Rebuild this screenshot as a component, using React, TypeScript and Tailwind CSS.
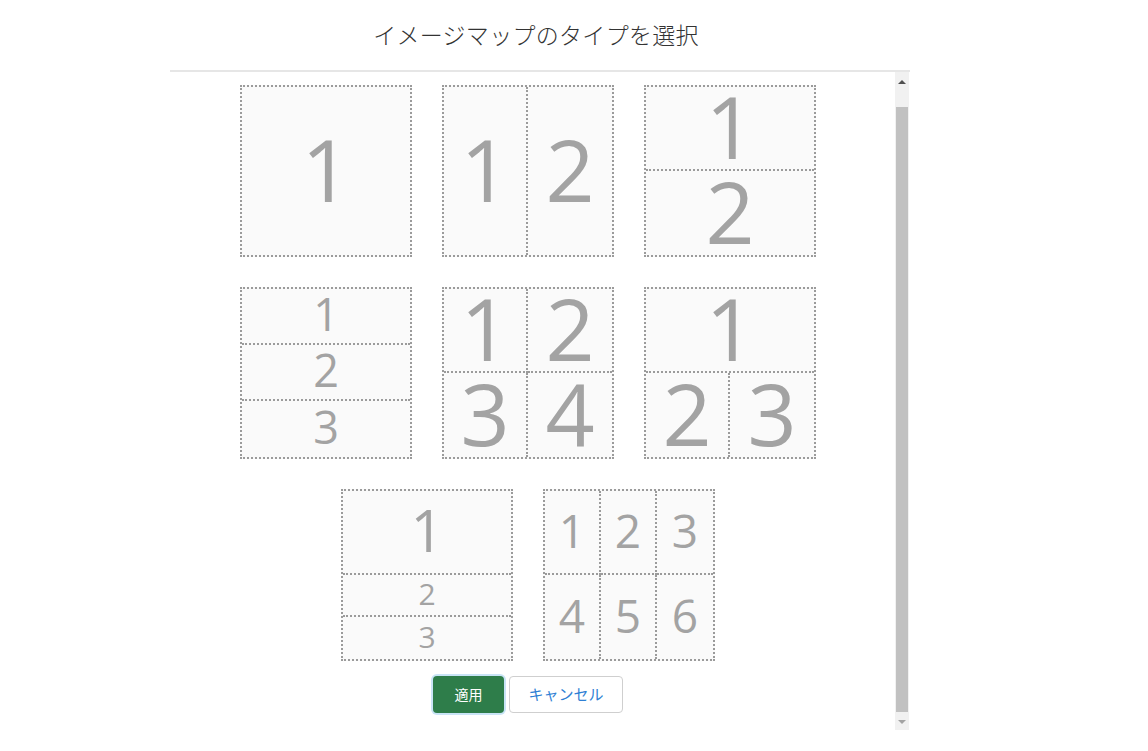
import React from "react";

type Cell = { n: number; size: number; span?: string };

const cellBase =
  "flex items-center justify-center border-dotted border-[#9b9b9b] text-[#a3a3a3]";

function Tile({ grid, cells }: { grid: string; cells: (Cell & { border: string })[] }) {
  return (
    <div
      className={`grid w-[172px] h-[172px] border-2 border-dotted border-[#9b9b9b] bg-[#fafafa] ${grid}`}
    >
      {cells.map((c) => (
        <div key={c.n} className={`${cellBase} ${c.border} ${c.span ?? ""}`}>
          <span style={{ fontSize: c.size }} className="leading-[0.7] -mt-[4px]">
            {c.n}
          </span>
        </div>
      ))}
    </div>
  );
}

const tiles = [
  [
    { grid: "grid-cols-1", cells: [{ n: 1, size: 86, border: "" }] },
    {
      grid: "grid-cols-2",
      cells: [
        { n: 1, size: 86, border: "border-r-2" },
        { n: 2, size: 86, border: "" },
      ],
    },
    {
      grid: "grid-rows-2",
      cells: [
        { n: 1, size: 86, border: "border-b-2" },
        { n: 2, size: 86, border: "" },
      ],
    },
  ],
  [
    {
      grid: "grid-rows-3",
      cells: [
        { n: 1, size: 45, border: "border-b-2" },
        { n: 2, size: 45, border: "border-b-2" },
        { n: 3, size: 45, border: "" },
      ],
    },
    {
      grid: "grid-cols-2 grid-rows-2",
      cells: [
        { n: 1, size: 86, border: "border-r-2 border-b-2" },
        { n: 2, size: 86, border: "border-b-2" },
        { n: 3, size: 86, border: "border-r-2" },
        { n: 4, size: 86, border: "" },
      ],
    },
    {
      grid: "grid-cols-2 grid-rows-2",
      cells: [
        { n: 1, size: 86, border: "border-b-2", span: "col-span-2" },
        { n: 2, size: 86, border: "border-r-2" },
        { n: 3, size: 86, border: "" },
      ],
    },
  ],
  [
    {
      grid: "grid-rows-[2fr_1fr_1fr]",
      cells: [
        { n: 1, size: 58, border: "border-b-2" },
        { n: 2, size: 30, border: "border-b-2" },
        { n: 3, size: 30, border: "" },
      ],
    },
    {
      grid: "grid-cols-3 grid-rows-2",
      cells: [
        { n: 1, size: 46, border: "border-r-2 border-b-2" },
        { n: 2, size: 46, border: "border-r-2 border-b-2" },
        { n: 3, size: 46, border: "border-b-2" },
        { n: 4, size: 46, border: "border-r-2" },
        { n: 5, size: 46, border: "border-r-2" },
        { n: 6, size: 46, border: "" },
      ],
    },
  ],
];

export default function App() {
  return (
    <div className="w-full h-[751px] bg-white overflow-hidden" style={{ fontFamily: "'Open Sans', 'Noto Sans CJK JP', sans-serif" }}>
      <div className="ml-[170px] w-[740px]">
        {/* Header */}
        <div className="h-[70px] w-[732px] flex items-center justify-center pb-[2px]">
          <h1 className="text-[23px] font-light text-[#333] tracking-[0.3px]" style={{ fontFamily: "'Noto Sans CJK JP', sans-serif" }}>
            イメージマップのタイプを選択
          </h1>
        </div>
        <div className="flex h-[660px] border-t-2 border-[#e6e6e6]">
          {/* Body */}
          <div className="w-[716px] flex flex-col items-center pt-[13px]">
            <div className="flex flex-col items-center gap-[30px]">
              {tiles.map((row, ri) => (
                <div key={ri} className="flex gap-[30px]">
                  {row.map((t, ti) => (
                    <Tile key={ti} grid={t.grid} cells={t.cells} />
                  ))}
                </div>
              ))}
            </div>
            <div className="flex gap-[5px] mt-[15px]">
              <button className="w-[71px] h-[37px] rounded-[4px] bg-[#2e7d4a] text-white text-[14px] shadow-[0_0_0_2px_#c9e4f6]" style={{ fontFamily: "'Noto Sans CJK JP', sans-serif" }}>
                適用
              </button>
              <button className="w-[114px] h-[37px] rounded-[4px] bg-white border border-[#cfcfcf] text-[#2f7fd4] text-[15px]" style={{ fontFamily: "'Noto Sans CJK JP', sans-serif" }}>
                キャンセル
              </button>
            </div>
          </div>
          {/* Scrollbar */}
          <div className="ml-[9px] w-[14px] h-[658px] bg-[#f1f1f1] flex flex-col items-center">
            <div className="h-[20px] flex items-center justify-center">
              <div className="w-0 h-0 border-l-[4px] border-r-[4px] border-b-[4px] border-l-transparent border-r-transparent border-b-[#505050]" />
            </div>
            <div className="flex-1 w-full pt-[15px] pb-[2px] px-[1px]">
              <div className="h-full bg-[#c1c1c1]" />
            </div>
            <div className="h-[16px] flex items-center justify-center">
              <div className="w-0 h-0 border-l-[4px] border-r-[4px] border-t-[4px] border-l-transparent border-r-transparent border-t-[#a3a3a3]" />
            </div>
          </div>
        </div>
      </div>
    </div>
  );
}
